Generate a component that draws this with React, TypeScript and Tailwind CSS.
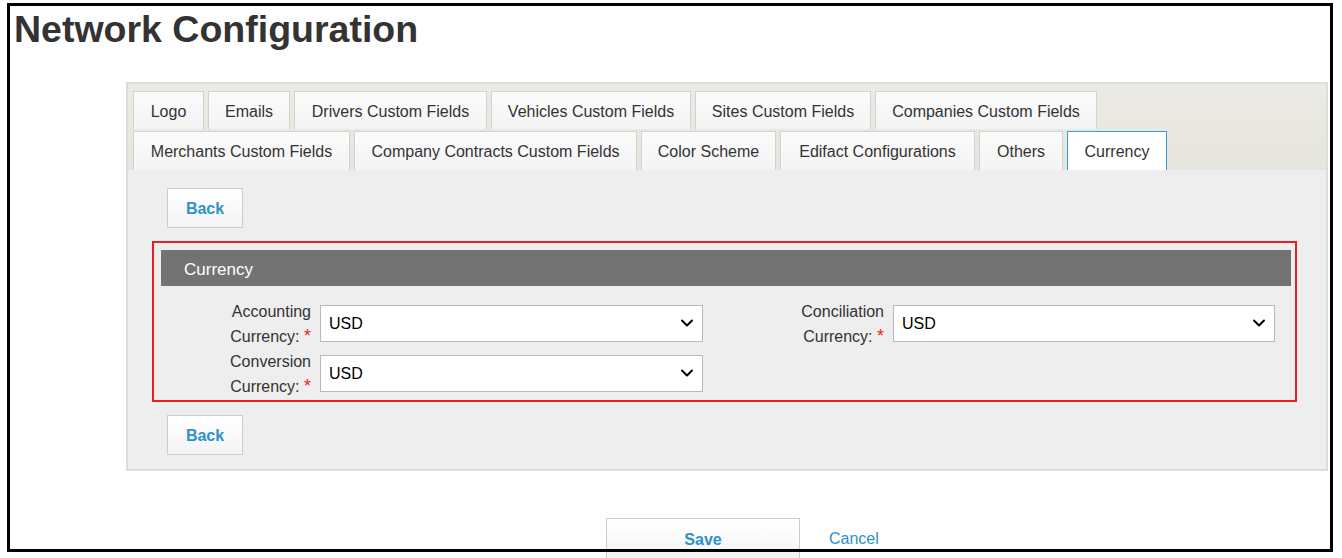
import { ChevronDown } from 'lucide-react'

const FONT = { fontFamily: '"Liberation Sans", Arial, sans-serif' }

const ROW_ONE = [
  { label: 'Logo', w: 'w-[71px]' },
  { label: 'Emails', w: 'w-[82px]' },
  { label: 'Drivers Custom Fields', w: 'w-[193px]' },
  { label: 'Vehicles Custom Fields', w: 'w-[200px]' },
  { label: 'Sites Custom Fields', w: 'w-[176px]' },
  { label: 'Companies Custom Fields', w: 'w-[222px]' },
]

const ROW_TWO = [
  { label: 'Merchants Custom Fields', w: 'w-[217px]' },
  { label: 'Company Contracts Custom Fields', w: 'w-[283px]' },
  { label: 'Color Scheme', w: 'w-[135px]' },
  { label: 'Edifact Configurations', w: 'w-[195px]' },
  { label: 'Others', w: 'w-[84px]' },
  { label: 'Currency', w: 'w-[100px]', active: true },
]

type Tab = { label: string; w: string; active?: boolean }

function TabRow({ tabs, height }: { tabs: Tab[]; height: string }) {
  return (
    <div className={`flex gap-[4px] ${height}`}>
      {tabs.map((t) =>
        t.active ? (
          <div
            key={t.label}
            className={`${t.w} flex items-center justify-center pt-[2px] border border-b-0 border-[#3a9dd0] bg-white text-[16px] text-[#333]`}
          >
            {t.label}
          </div>
        ) : (
          <div
            key={t.label}
            className={`${t.w} flex items-center justify-center pt-[2px] border border-b-0 border-[#d2d2d0] bg-gradient-to-b from-[#fbfbfb] to-[#f4f4f4] text-[16px] text-[#333]`}
          >
            {t.label}
          </div>
        ),
      )}
    </div>
  )
}

function BackButton() {
  return (
    <button className="w-[76px] h-[40px] pt-[1px] border border-[#cccccc] bg-gradient-to-b from-[#ffffff] to-[#f4f4f4] text-[16px] font-bold text-[#2b93c8]">
      Back
    </button>
  )
}

function Field({ first, labelW, selectW }: { first: string; labelW: string; selectW: string }) {
  return (
    <div className="flex items-center h-[50px]">
      <div className={`${labelW} pt-[2px] text-right text-[16px] leading-[25px] text-[#333]`}>
        <div>{first}</div>
        <div>
          Currency: <span className="text-[18px] text-[#f01c1c]">*</span>
        </div>
      </div>
      <div className={`relative ml-[9px] ${selectW} h-[37px]`}>
        <select className="w-full h-full appearance-none border border-[#b8b8b8] bg-white pl-[8px] pt-[2px] text-[16px] text-black outline-none">
          <option>USD</option>
        </select>
        <ChevronDown
          className="absolute right-[6px] top-[8px] pointer-events-none text-black"
          size={20}
          strokeWidth={2.4}
        />
      </div>
    </div>
  )
}

export default function App() {
  return (
    <div className="relative w-[1342px] h-[558px] overflow-hidden bg-white" style={FONT}>
      <h1 className="pl-[14px] pt-[11px] text-[37.5px] leading-[37px] font-bold text-[#333333]">
        Network Configuration
      </h1>

      <div className="ml-[126px] mt-[34px] w-[1202px] border-2 border-[#dddddd]">
        <div className="flex flex-col gap-[2px] pt-[7px] pl-[5px] bg-gradient-to-b from-[#ebeae4] to-[#e6e5dd]">
          <TabRow tabs={ROW_ONE} height="h-[38px]" />
          <TabRow tabs={ROW_TWO} height="h-[39px]" />
        </div>

        <div className="bg-[#eeeeee] pt-[18px] pb-[14px] pl-[24px] pr-[29px]">
          <div className="pl-[15px]">
            <BackButton />
          </div>

          <div className="mt-[13px] border-2 border-[#ec1c24] pt-[7px] pl-[7px] pr-[4px] pb-[2px]">
            <div className="h-[36px] flex items-center bg-[#737373] pl-[23px] pt-[3px] text-[17px] text-white">
              Currency
            </div>
            <div className="mt-[12px] flex gap-[31px]">
              <div className="flex flex-col">
                <Field first="Accounting" labelW="w-[150px]" selectW="w-[383px]" />
                <Field first="Conversion" labelW="w-[150px]" selectW="w-[383px]" />
              </div>
              <div className="flex flex-col">
                <Field first="Conciliation" labelW="w-[150px]" selectW="w-[382px]" />
              </div>
            </div>
          </div>

          <div className="mt-[13px] pl-[15px]">
            <BackButton />
          </div>
        </div>
      </div>

      <div className="mt-[47px] pl-[606px] flex items-center gap-[29px]">
        <button className="w-[194px] h-[41px] pt-[2px] border border-[#cccccc] bg-gradient-to-b from-[#ffffff] to-[#f4f4f4] text-[16px] font-bold text-[#2b93c8]">
          Save
        </button>
        <a className="text-[16px] text-[#2f8fcc]">Cancel</a>
      </div>

      <div className="absolute left-[7px] top-[3px] w-[1326px] h-[549px] border-[3px] border-black pointer-events-none" />
    </div>
  )
}
